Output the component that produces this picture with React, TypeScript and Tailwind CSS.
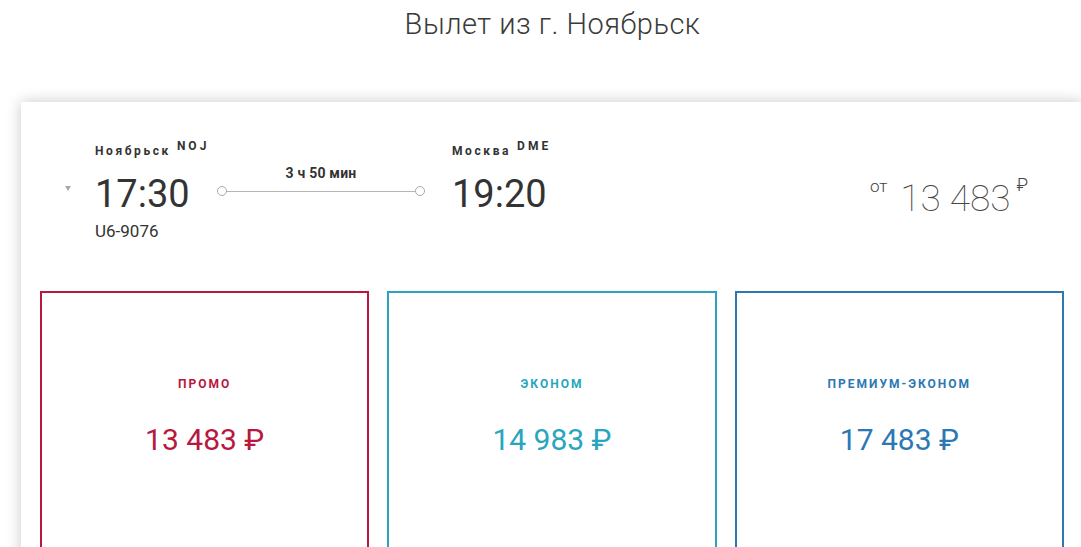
import React from 'react';

type Fare = {
  name: string;
  price: string;
  border: string;
  text: string;
};

const fares: Fare[] = [
  { name: 'Промо', price: '13 483 ₽', border: 'border-[#b8173f]', text: 'text-[#b8173f]' },
  { name: 'Эконом', price: '14 983 ₽', border: 'border-[#27a6bd]', text: 'text-[#27a6bd]' },
  { name: 'Премиум-эконом', price: '17 483 ₽', border: 'border-[#2c78b3]', text: 'text-[#2c78b3]' },
];

const Point: React.FC<{ city: string; code: string; time: string; flight?: string }> = ({ city, code, time, flight }) => (
  <div className="flex flex-col">
    <div className="flex items-start text-[12px] leading-[16px] font-bold text-[#333] tracking-[2.6px]">
      <span>{city}</span>
      <span className="ml-[6px] -mt-[5px] tracking-[3px]">{code}</span>
    </div>
    <div className="mt-[16px] text-[38px] leading-none text-[#333]">{time}</div>
    {flight && <div className="mt-[8px] text-[17px] leading-[20px] text-[#333]">{flight}</div>}
  </div>
);

const App: React.FC = () => {
  return (
    <div className="w-[1081px] h-[547px] overflow-hidden bg-white font-['Roboto',sans-serif]">
      <h1 className="pt-[6px] pl-[24px] text-center text-[29px] leading-[36px] font-light tracking-[0.5px] text-[#3a3a3a]">
        Вылет из г. Ноябрьск
      </h1>

      <div className="mt-[60px] ml-[21px] w-[1062px] h-[460px] bg-white shadow-[0_0_14px_rgba(0,0,0,0.22)]">
        {/* flight summary */}
        <div className="flex items-start pl-[41px] pt-[41px] pr-[55px]">
          <div className="w-[33px] pt-[43px]">
            <div className="w-0 h-0 ml-[3px] border-l-[3.5px] border-r-[3.5px] border-t-[5px] border-l-transparent border-r-transparent border-t-[#a8a8a8]" />
          </div>

          <div className="w-[122px]">
            <Point city="Ноябрьск" code="NOJ" time="17:30" flight="U6-9076" />
          </div>

          <div className="w-[208px] mt-[22px] flex flex-col">
            <div className="text-center text-[14px] leading-[16px] font-bold tracking-[0.2px] text-[#333]">3 ч 50 мин</div>
            <div className="mt-[5px] flex items-center">
              <div className="w-[10px] h-[10px] rounded-full border border-[#aaa] bg-white" />
              <div className="flex-1 h-px bg-[#b5b5b5]" />
              <div className="w-[10px] h-[10px] rounded-full border border-[#aaa] bg-white" />
            </div>
          </div>

          <div className="ml-[27px]">
            <Point city="Москва" code="DME" time="19:20" />
          </div>

          <div className="ml-auto mt-[37px] flex items-start text-[#444]">
            <span className="text-[17px] leading-none font-light mt-[-2px] mr-[13px]">от</span>
            <span className="text-[37px] leading-none font-thin">13 483</span>
            <span className="text-[18px] leading-none font-light ml-[6px] -mt-[4px]">₽</span>
          </div>
        </div>

        {/* fare options */}
        <div className="mt-[50px] px-[19px] grid grid-cols-3 gap-[18px]">
          {fares.map((fare) => (
            <div key={fare.name} className={`h-[300px] border-2 ${fare.border} flex flex-col items-center pt-[83px]`}>
              <div className={`text-[12px] leading-[16px] font-bold uppercase tracking-[2px] ${fare.text}`}>
                {fare.name}
              </div>
              <div className={`mt-[33px] text-[30px] leading-none ${fare.text}`}>{fare.price}</div>
            </div>
          ))}
        </div>
      </div>
    </div>
  );
};

export default App;
